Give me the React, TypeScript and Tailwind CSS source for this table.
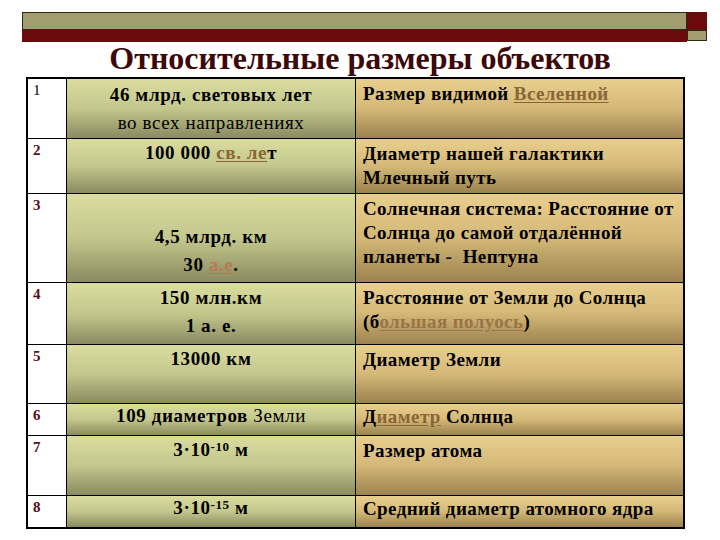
import React from "react";

const Link = ({ children, tone = "text-[#8a6536]" }: { children: React.ReactNode; tone?: string }) => (
  <span className={`${tone} underline underline-offset-2`}>{children}</span>
);

const Sup = ({ children }: { children: React.ReactNode }) => (
  <span className="text-[13px] align-top leading-[22px]">{children}</span>
);

type Row = {
  n: string;
  h: string;
  mid: React.ReactNode;
  right: React.ReactNode;
};

const rows: Row[] = [
  {
    n: "1",
    h: "h-[59px]",
    mid: (
      <div className="pt-[2px]">
        <div>46 млрд. световых лет</div>
        <div className="font-normal">во всех направлениях</div>
      </div>
    ),
    right: (
      <div>
        Размер видимой <Link>Вселенной</Link>
      </div>
    ),
  },
  {
    n: "2",
    h: "h-[55px]",
    mid: (
      <div>
        100 000 <Link>св. ле</Link>т
      </div>
    ),
    right: (
      <>
        <div>Диаметр нашей галактики</div>
        <div>Млечный путь</div>
      </>
    ),
  },
  {
    n: "3",
    h: "h-[89px]",
    mid: (
      <div className="pt-[29px]">
        <div>4,5 млрд. км</div>
        <div>
          30 <Link tone="text-[#b87a52]">а.е</Link>.
        </div>
      </div>
    ),
    right: (
      <>
        <div>Солнечная система: Расстояние от</div>
        <div>Солнца до самой отдалённой</div>
        <div>планеты -&nbsp; Нептуна</div>
      </>
    ),
  },
  {
    n: "4",
    h: "h-[62px]",
    mid: (
      <div className="pt-[1px]">
        <div>150 млн.км</div>
        <div>1 а. е.</div>
      </div>
    ),
    right: (
      <>
        <div>Расстояние от Земли до Солнца</div>
        <div>
          (б<Link tone="text-[#9a7448]">ольшая полуось</Link>)
        </div>
      </>
    ),
  },
  { n: "5", h: "h-[59px]", mid: <div>13000 км</div>, right: <div>Диаметр Земли</div> },
  {
    n: "6",
    h: "h-[32px]",
    mid: (
      <div className="-mt-[2px]">
        109 диаметров <span className="font-normal">Земли</span>
      </div>
    ),
    right: (
      <div className="-mt-[2px]">
        Д<Link>иаметр</Link> Солнца
      </div>
    ),
  },
  {
    n: "7",
    h: "h-[60px]",
    mid: (
      <div>
        3·10<Sup>-10</Sup> м
      </div>
    ),
    right: <div>Размер атома</div>,
  },
  {
    n: "8",
    h: "h-[32px]",
    mid: (
      <div className="-mt-[2px]">
        3·10<Sup>-15</Sup> м
      </div>
    ),
    right: <div className="-mt-[2px]">Средний диаметр атомного ядра</div>,
  },
];

export default function App() {
  return (
    <div className="w-[720px] h-[540px] bg-white pt-[12px] font-['Liberation_Serif','Times_New_Roman',serif]">
      {/* header bar */}
      <div className="flex ml-[22px]">
        <div className="w-[665px] flex flex-col">
          <div className="h-[18px] bg-[#a29d6f] border border-[#2a2a1a]"></div>
          <div className="h-[12px] bg-[#6b0a0d]"></div>
        </div>
        <div className="w-[20px] flex flex-col">
          <div className="h-[18px] bg-[#6b0a0d]"></div>
          <div className="h-[11px] bg-[#a29d6f] border border-[#2a2a1a]"></div>
        </div>
      </div>

      <h1 className="text-center text-[32px] font-bold text-[#3d0808] leading-[30px] h-[35px] pt-[1px]">
        Относительные размеры объектов
      </h1>

      {/* table */}
      <div className="ml-[26px] w-[659px] border-2 border-black">
        {rows.map((r, i) => (
          <div key={r.n} className={`flex ${r.h} ${i > 0 ? "border-t border-black" : ""}`}>
            <div
              className={`w-[38px] bg-white pl-[5px] pt-[3px] text-[15px] leading-[16px] ${
                r.n === "1" ? "text-black" : "font-bold text-[#5a0d1a]"
              }`}
            >
              {r.n}
            </div>
            <div className="w-[289px] border-l border-black bg-gradient-to-b from-[#dadd9e] via-[#c4c78c] to-[#8a8b60] text-center font-bold text-[19px] tracking-[0.6px] leading-[28px] text-black">
              {r.mid}
            </div>
            <div className="flex-1 border-l border-black bg-gradient-to-b from-[#e9cf8e] via-[#d4b877] to-[#9c834f] pl-[7px] font-bold text-[19px] tracking-[0.4px] leading-[24px] text-black pt-[3px]">
              {r.right}
            </div>
          </div>
        ))}
      </div>
    </div>
  );
}
